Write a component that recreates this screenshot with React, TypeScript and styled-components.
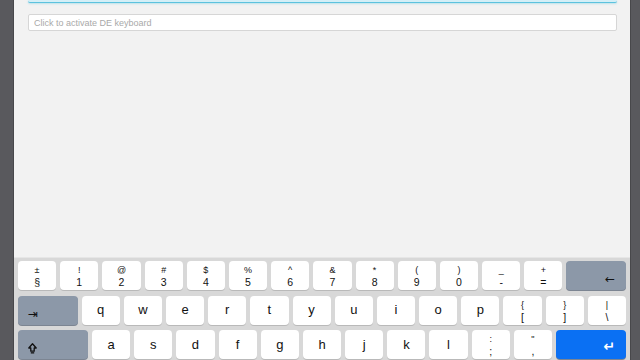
import styled, { createGlobalStyle } from 'styled-components';

const GlobalStyle = createGlobalStyle`
  html, body {
    margin: 0;
    padding: 0;
    width: 640px;
    height: 360px;
    overflow: hidden;
    font-family: "Liberation Sans", Arial, sans-serif;
  }
  #root {
    height: 360px;
  }
`;

type KeyDef = {
  top?: string;
  label: string;
  kind?: 'char' | 'mod' | 'enter';
  wide?: boolean;
};

const row1: KeyDef[] = [
  { top: '±', label: '§' },
  { top: '!', label: '1' },
  { top: '@', label: '2' },
  { top: '#', label: '3' },
  { top: '$', label: '4' },
  { top: '%', label: '5' },
  { top: '^', label: '6' },
  { top: '&', label: '7' },
  { top: '*', label: '8' },
  { top: '(', label: '9' },
  { top: ')', label: '0' },
  { top: '_', label: '-' },
  { top: '+', label: '=' },
  { label: '←', kind: 'mod', wide: true },
];

const row2: KeyDef[] = [
  { label: '⇥', kind: 'mod', wide: true },
  ...'qwertyuiop'.split('').map((c) => ({ label: c })),
  { top: '{', label: '[' },
  { top: '}', label: ']' },
  { top: '|', label: '\\' },
];

const row3: KeyDef[] = [
  { label: 'shift', kind: 'mod', wide: true },
  ...'asdfghjkl'.split('').map((c) => ({ label: c })),
  { top: ':', label: ';' },
  { top: '"', label: ',' },
  { label: '↵', kind: 'enter', wide: true },
];

const ShiftIcon = () => (
  <svg width="9" height="11" viewBox="0 0 9 11">
    <path
      d="M4.5 0.8 L8.2 5 H6.2 V8.2 H2.8 V5 H0.8 Z"
      fill="none"
      stroke="#111"
      strokeWidth="1.3"
      strokeLinejoin="round"
    />
    <rect x="2.8" y="9.2" width="3.4" height="1.3" fill="#111" />
  </svg>
);

const Key = ({ k }: { k: KeyDef }) => {
  if (k.kind === 'mod' || k.kind === 'enter') {
    const right = k.label === '←' || k.label === '↵';
    return (
      <KeyCap $kind={k.kind} $wide>
        <ModGlyph $right={right} $enter={k.kind === 'enter'}>
          {k.label === 'shift' ? <ShiftIcon /> : k.label}
        </ModGlyph>
      </KeyCap>
    );
  }
  if (k.top) {
    return (
      <KeyCap $kind="char">
        <Stack>
          <Upper>{k.top}</Upper>
          <Lower>{k.label}</Lower>
        </Stack>
      </KeyCap>
    );
  }
  return (
    <KeyCap $kind="char">
      <Letter>{k.label}</Letter>
    </KeyCap>
  );
};

const App = () => {
  return (
    <>
      <GlobalStyle />
      <Screen>
        <SideBar />
        <Main>
          <FocusedField />
          <KeyboardInput placeholder="Click to activate DE keyboard" readOnly />
          <Spacer />
          <Keyboard>
            {[row1, row2, row3].map((row, i) => (
              <KeyRow key={i}>
                {row.map((k, j) => (
                  <Key key={j} k={k} />
                ))}
              </KeyRow>
            ))}
          </Keyboard>
        </Main>
        <SideBar $right />
      </Screen>
    </>
  );
};

export default App;

const Screen = styled.div`
  display: flex;
  width: 640px;
  height: 360px;
  background: #f2f2f2;
`;

const SideBar = styled.div<{ $right?: boolean }>`
  width: ${(p) => (p.$right ? '10px' : '14px')};
  flex-shrink: 0;
  background: #59595d;
  border-left: ${(p) => (p.$right ? '1px solid #48484b' : 'none')};
  border-right: ${(p) => (p.$right ? 'none' : '1px solid #48484b')};
  box-sizing: border-box;
`;

const Main = styled.div`
  flex: 1;
  display: flex;
  flex-direction: column;
  min-width: 0;
  background: #f2f2f2;
`;

const FocusedField = styled.div`
  height: 2px;
  margin: 0 13px 0 14px;
  background: #d4eff7;
  border-bottom: 1px solid #5cc2de;
  box-shadow: 0 1px 2px rgba(92, 194, 222, 0.35);
  border-radius: 0 0 2px 2px;
`;

const KeyboardInput = styled.input`
  margin: 11px 13px 0 14px;
  height: 17px;
  box-sizing: border-box;
  border: 1px solid #d6d6d6;
  border-radius: 2px;
  background: #fff;
  padding: 0 5px;
  font-family: "Liberation Sans", Arial, sans-serif;
  font-size: 9px;
  outline: none;

  &::placeholder {
    color: #a9a9a9;
  }
`;

const Spacer = styled.div`
  flex: 1;
`;

const Keyboard = styled.div`
  height: 103px;
  box-sizing: border-box;
  padding: 3px 4px 0;
  background: #d8d8d8;
  border-top: 1px solid #e6e6e6;
  display: flex;
  flex-direction: column;
  gap: 5.5px;
  overflow: hidden;
`;

const KeyRow = styled.div`
  display: flex;
  gap: 4px;
  height: 29px;
  flex-shrink: 0;
`;

const KeyCap = styled.div<{ $kind: 'char' | 'mod' | 'enter'; $wide?: boolean }>`
  position: relative;
  width: ${(p) => (p.$wide ? 'auto' : '38.2px')};
  flex: ${(p) => (p.$wide ? '1' : '0 0 38.2px')};
  height: 29px;
  border-radius: 4px;
  box-sizing: border-box;
  display: flex;
  align-items: center;
  justify-content: center;
  color: #111;
  background: ${(p) =>
    p.$kind === 'mod' ? '#8c98a8' : p.$kind === 'enter' ? '#0a70f3' : '#ffffff'};
  box-shadow: 0 1px 0 ${(p) => (p.$kind === 'char' ? '#b9b9b9' : '#7c8592')};
`;

const Stack = styled.div`
  display: flex;
  flex-direction: column;
  align-items: center;
  line-height: 12px;
  margin-top: 1px;
`;

const Upper = styled.span`
  font-size: 9px;
`;

const Lower = styled.span`
  font-size: 10.5px;
`;

const Letter = styled.span`
  font-size: 13px;
  line-height: 1;
  margin-top: -1px;
`;

const ModGlyph = styled.span<{ $right: boolean; $enter: boolean }>`
  position: absolute;
  bottom: ${(p) => (p.$enter ? '6px' : '5px')};
  ${(p) => (p.$right ? 'right: 11px;' : 'left: 10px;')}
  font-size: ${(p) => (p.$enter ? '14px' : '12px')};
  font-weight: ${(p) => (p.$enter ? 'bold' : 'normal')};
  line-height: 1;
  color: ${(p) => (p.$enter ? '#ffffff' : '#111')};
  font-family: "DejaVu Sans", sans-serif;
  display: flex;
  align-items: flex-end;
`;
